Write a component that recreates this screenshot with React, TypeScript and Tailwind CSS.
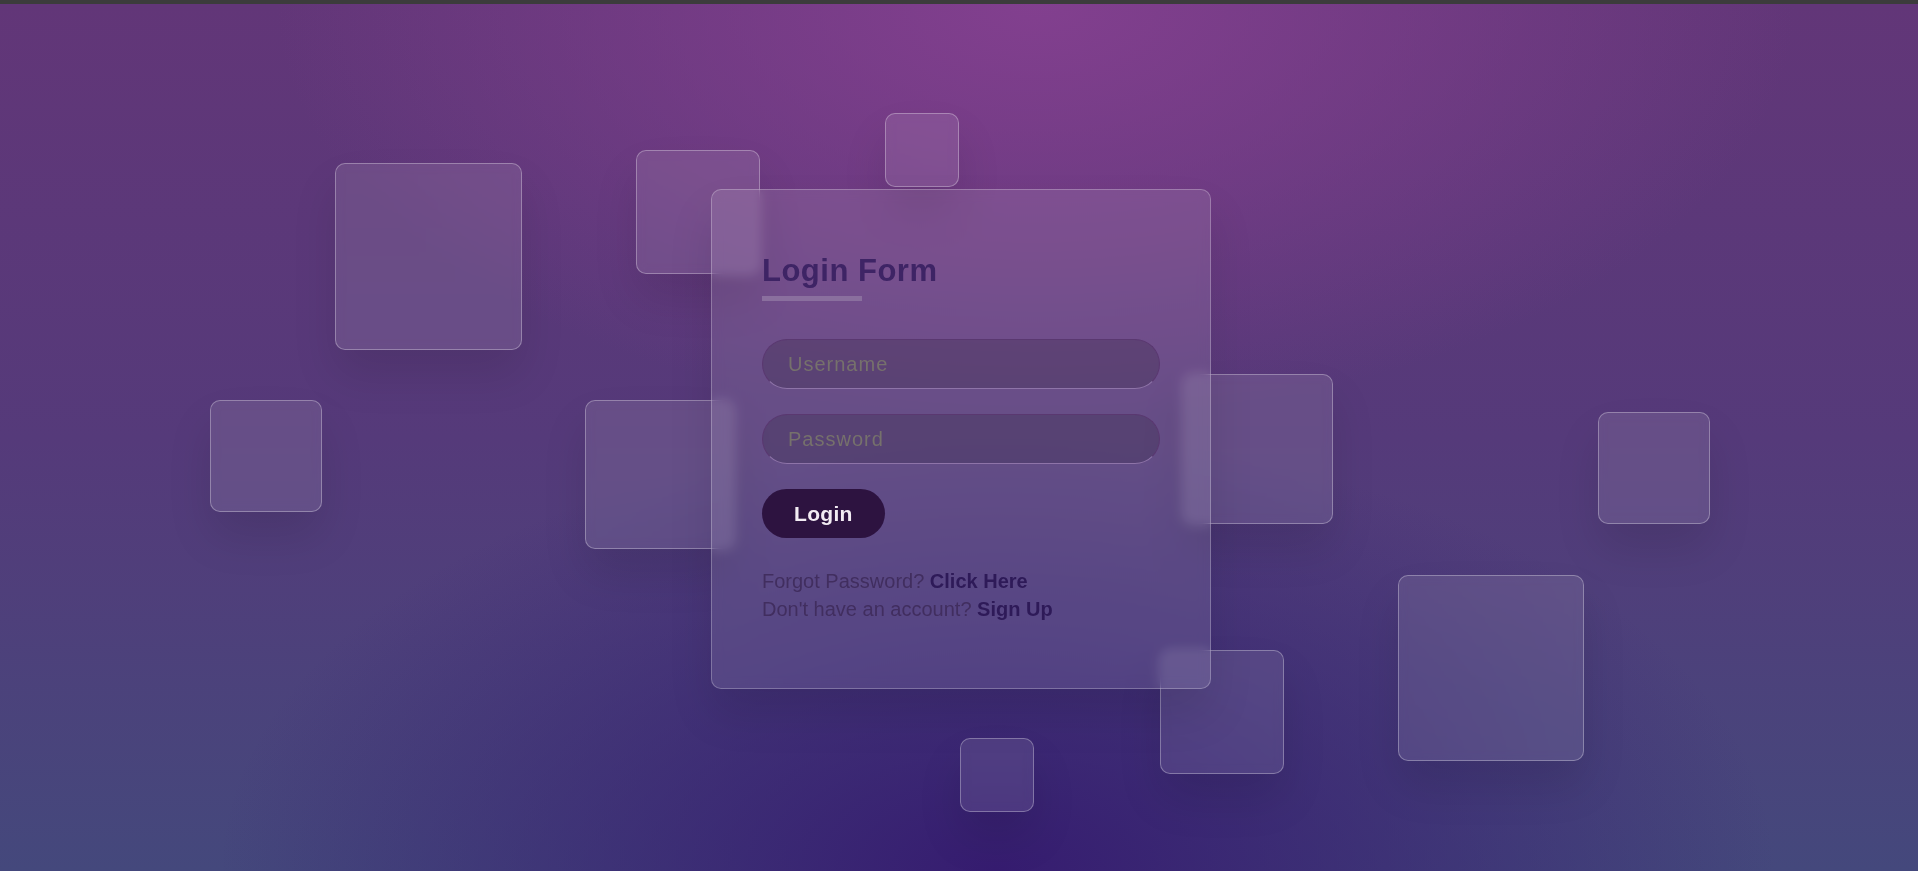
import React, { useState } from 'react'

const squares = [
  'left-[335px] top-[163px] w-[187px] h-[187px]',
  'left-[636px] top-[150px] w-[124px] h-[124px]',
  'left-[885px] top-[113px] w-[74px] h-[74px]',
  'left-[210px] top-[400px] w-[112px] h-[112px]',
  'left-[585px] top-[400px] w-[149px] h-[149px]',
  'left-[1183px] top-[374px] w-[150px] h-[150px]',
  'left-[1160px] top-[650px] w-[124px] h-[124px]',
  'left-[1398px] top-[575px] w-[186px] h-[186px]',
  'left-[1598px] top-[412px] w-[112px] h-[112px]',
  'left-[960px] top-[738px] w-[74px] h-[74px]',
]

export default function App() {
  const [username, setUsername] = useState('')
  const [password, setPassword] = useState('')

  return (
    <div className="relative min-h-[871px] w-full overflow-hidden font-['Liberation_Sans',Arial,sans-serif]">
      <div className="h-[4px] bg-[#3c3c3c]" />
      <main className="relative flex h-[867px] justify-center pl-[4px] pt-[185px] bg-[radial-gradient(ellipse_950px_520px_at_54%_0%,rgba(132,64,144,0.95),rgba(132,64,144,0)_80%),radial-gradient(ellipse_1000px_560px_at_52%_100%,rgba(54,28,112,1),rgba(54,28,112,0)_78%),linear-gradient(to_bottom,#623678,#553a7a_50%,#44487c)]">
        {squares.map((cls, i) => (
          <div
            key={i}
            className={'absolute -mt-[4px] rounded-[10px] border border-white/30 bg-white/10 backdrop-blur-[5px] shadow-[0_25px_45px_rgba(0,0,0,0.1)] ' + cls}
          />
        ))}

        <div className="relative z-10 h-[500px] w-[500px] rounded-[10px] border border-white/25 bg-white/10 px-[50px] pt-[64px] backdrop-blur-[6px] shadow-[0_25px_45px_rgba(0,0,0,0.1)]">
          <h2 className="text-[31px] font-bold leading-[34px] tracking-[0.5px] text-[#3e2465]">Login Form</h2>
          <div className="mt-[8px] h-[5px] w-[100px] bg-[#8a6f9e]" />

          <form onSubmit={e => e.preventDefault()}>
            <input
              className="mt-[38px] block h-[50px] w-full rounded-full border border-[#5a3870] border-b-[#8e74a8] bg-black/15 px-[25px] text-[20px] tracking-[1px] text-white outline-none placeholder:text-[#76716c]"
              placeholder="Username"
              value={username}
              onChange={e => setUsername(e.target.value)}
            />
            <input
              type="password"
              className="mt-[25px] block h-[50px] w-full rounded-full border border-[#5a3870] border-b-[#8e74a8] bg-black/15 px-[25px] text-[20px] tracking-[1px] text-white outline-none placeholder:text-[#76716c]"
              placeholder="Password"
              value={password}
              onChange={e => setPassword(e.target.value)}
            />
            <button className="mt-[25px] block h-[49px] rounded-full bg-[#2d1340] px-[32px] text-[21px] font-bold tracking-[0.3px] text-[#f3ecf3]">
              Login
            </button>
          </form>

          <div className="mt-[29px] text-[20px] leading-[28px] text-[#412e5f]">
            <p>Forgot Password? <a href="#" className="font-bold text-[#2e1a58]">Click Here</a></p>
            <p>Don't have an account? <a href="#" className="font-bold text-[#2e1a58]">Sign Up</a></p>
          </div>
        </div>
      </main>
    </div>
  )
}
